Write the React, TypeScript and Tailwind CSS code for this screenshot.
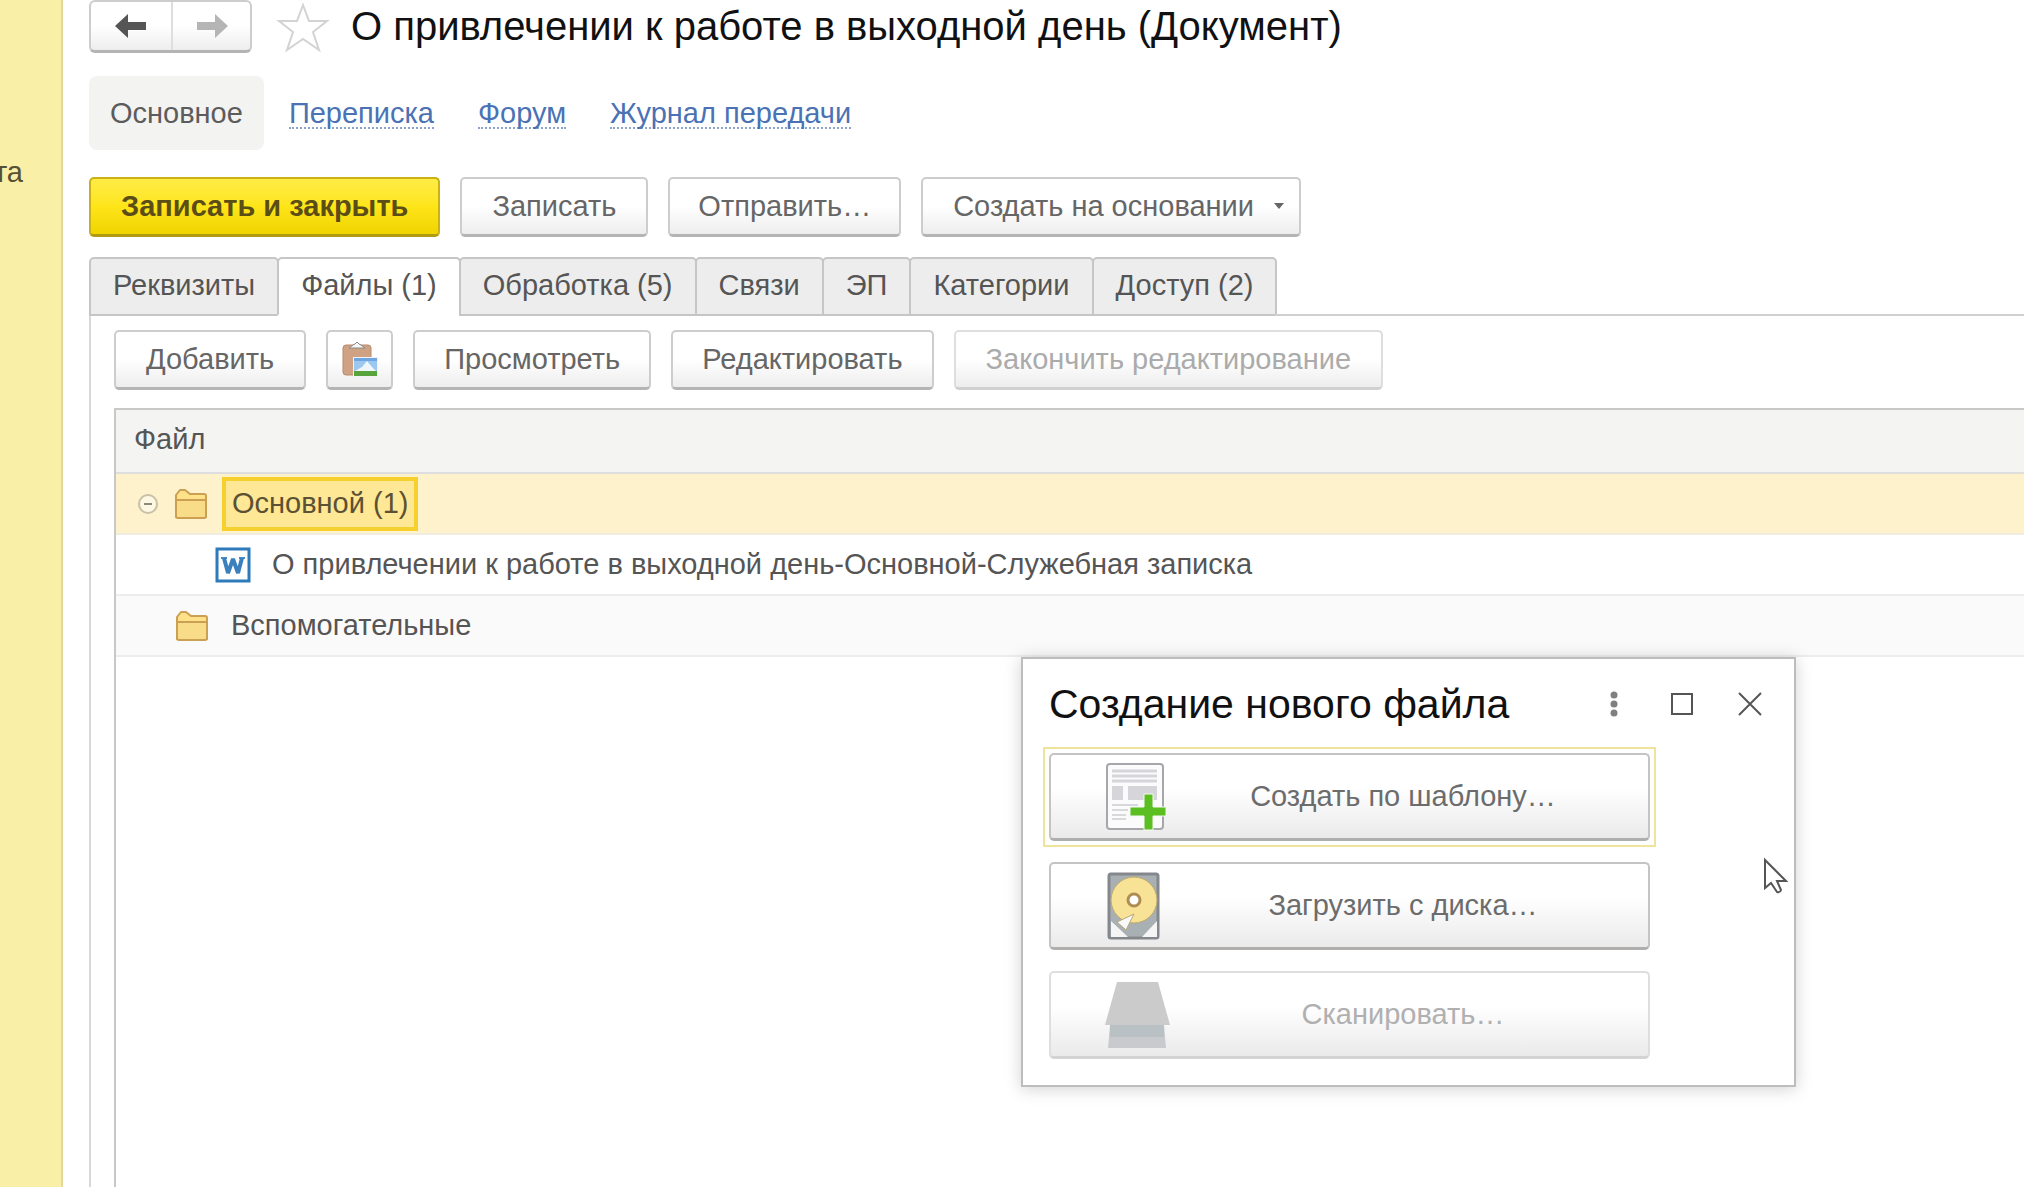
import type { ReactNode } from 'react'
import { clsx } from 'clsx'

const links = ['Переписка', 'Форум', 'Журнал передачи']

const tabs = [
  { title: 'Реквизиты' },
  { title: 'Файлы (1)', active: true },
  { title: 'Обработка (5)' },
  { title: 'Связи' },
  { title: 'ЭП' },
  { title: 'Категории' },
  { title: 'Доступ (2)' },
]

type ButtonProps = {
  children: ReactNode
  primary?: boolean
  disabled?: boolean
  className?: string
  label?: string
}

function Button({ children, primary, disabled, className = 'px-[30px]', label }: ButtonProps) {
  return (
    <button
      type="button"
      disabled={disabled}
      aria-label={label}
      className={clsx(
        'flex h-[60px] shrink-0 items-center justify-center rounded-[5px] border-2 border-b-[3px] pb-0.5 whitespace-nowrap',
        primary && 'border-[#c9b116] border-b-[#b09b12] bg-linear-to-b from-[#ffec45] via-[#fee518] to-[#f0d400] font-bold text-[#5a4d16]',
        !primary && 'bg-linear-to-b from-white from-50% to-[#ededed]',
        !primary && !disabled && 'border-[#cdcdcd] border-b-[#b4b4b4] text-[#666]',
        disabled && 'border-[#dedede] border-b-[#d0d0d0] text-[#ababab]',
        className,
      )}
    >
      {children}
    </button>
  )
}

function StarIcon() {
  return (
    <svg width="54" height="52" viewBox="0 0 54 52" fill="white" stroke="#d3d3d3" strokeWidth="2">
      <path d="M27 4 33 20H51L37 31 43 49 27 38 11 49 17 31 3 20H21Z" />
    </svg>
  )
}

function ArrowIcon({ className }: { className: string }) {
  return (
    <svg width="32" height="24" viewBox="0 0 32 24" fill="currentColor" className={className}>
      <path d="M0 12 13 0V8H31V16H13V24Z" />
    </svg>
  )
}

function PasteIcon() {
  return (
    <svg width="36" height="36" viewBox="0 0 36 36">
      <rect x="1" y="4" width="28" height="30" rx="3" fill="#cfa283" stroke="#b98a6b" />
      <path d="M7 7 11 4 13 3 15 1 17 3 19 4 23 7Z" fill="#f7f7f7" stroke="#888" />
      <path d="M11 16H36V36H11Z" fill="#eef3f8" />
      <path d="M12 17H35V30H12Z" fill="#9cc8f0" />
      <path d="M12 17H35V20H12Z" fill="#6fa6e2" />
      <path d="M13 30 20 26 25 20 30 26 34 30Z" fill="#eff6fc" />
      <path d="M12 30H35V35H12Z" fill="#57a33c" />
    </svg>
  )
}

function FolderIcon() {
  return (
    <svg width="34" height="32" viewBox="0 0 34 32" stroke="#cba052" strokeWidth="2" strokeLinejoin="round">
      <path d="M2 29V7L6 2H11L16 6H30Q32 6 32 8V29Z" fill="#ffe18a" />
      <path d="M2 12H32V28Q32 30 30 30H4Q2 30 2 28Z" fill="#f8dc88" />
    </svg>
  )
}

function WordIcon() {
  return (
    <svg width="36" height="36" viewBox="0 0 36 36" fill="none">
      <rect x="2" y="2" width="32" height="32" fill="white" stroke="#2f7abb" strokeWidth="3" />
      <path d="M6 11H12M24 11H30" stroke="#4a8cc5" strokeWidth="2" />
      <path d="M9 11 13 26 18 12 23 26 27 11" stroke="#3a80be" strokeWidth="4" strokeLinejoin="bevel" />
    </svg>
  )
}

function TemplateIcon() {
  return (
    <svg width="66" height="70" viewBox="0 0 66 70">
      <rect x="3" y="2" width="56" height="65" rx="3" fill="#fbfbfb" stroke="#a5a7aa" strokeWidth="2" />
      <path d="M8 9H53M8 14H53M8 19H53" stroke="#d6d6da" strokeWidth="3" />
      <path d="M8 24H19V38H8ZM24 24H53V38H24Z" fill="#d6d6da" />
      <path d="M8 43H34M8 48H24M8 53H22M8 57H22" stroke="#d9d9dc" strokeWidth="2" />
      <path d="M40 32H49V45H62V54H49V68H40V54H26V45H40Z" fill="#5bbf21" stroke="#f6f8f4" strokeWidth="1" />
    </svg>
  )
}

function DiskIcon() {
  return (
    <svg width="66" height="70" viewBox="0 0 66 70">
      <rect x="5" y="3" width="49" height="64" rx="2" fill="#a9b0b4" stroke="#84888c" strokeWidth="3" />
      <path d="M7 50 24 66H7ZM53 50 38 66H53Z" fill="#f5f5f5" />
      <circle cx="30" cy="29" r="23" fill="#f7e295" stroke="#bda96d" strokeWidth="1" />
      <circle cx="30" cy="29" r="6" fill="white" stroke="#ad8d52" strokeWidth="3" />
      <path d="M30 43 13 51 22 59Z" fill="#f8f8f8" stroke="#b9a777" strokeWidth="1" />
    </svg>
  )
}

function ScannerIcon() {
  return (
    <svg width="66" height="70" viewBox="0 0 66 70">
      <path d="M13 2H54L66 45H1Z" fill="#cbcbcb" />
      <path d="M6 45H60L62 68H4Z" fill="#c9cacd" />
      <path d="M6 45H60V57H6Z" fill="#bac1c5" />
    </svg>
  )
}

function DialogButton({ icon, children, disabled }: { icon: ReactNode; children: ReactNode; disabled?: boolean }) {
  return (
    <button
      type="button"
      disabled={disabled}
      className={clsx(
        'flex h-[88px] w-full items-center rounded-[5px] border-2 border-b-[3px] bg-linear-to-b from-white from-40% to-[#eaeaea] pr-3 pl-[53px]',
        disabled ? 'border-[#dedede] border-b-[#d3d3d3] text-[#b0b0b0]' : 'border-[#c6c3c3] border-b-[#b0adad] text-[#6c6c6c]',
      )}
    >
      {icon}
      <span className="flex-1 pb-0.5 text-center">{children}</span>
    </button>
  )
}

function CreateFileDialog() {
  return (
    <section
      role="dialog"
      aria-labelledby="dialog-title"
      className="absolute top-[657px] left-[1021px] w-[775px] border-2 border-[#bdbdbd] bg-white px-[26px] pt-[17px] pb-[26px] shadow-[0_2px_16px_rgba(0,0,0,0.18)]"
    >
      <header className="flex h-14 items-center justify-between">
        <h2 id="dialog-title" className="text-[41px] leading-14 whitespace-nowrap text-[#111]">
          Создание нового файла
        </h2>
        <div className="flex items-center gap-9 pr-0.5 text-[#555]">
          <button type="button" aria-label="Ещё" className="flex w-8 justify-center">
            <svg width="8" height="26" viewBox="0 0 8 26" fill="#808080">
              <circle cx="4" cy="4" r="3.5" />
              <circle cx="4" cy="13" r="3.5" />
              <circle cx="4" cy="22" r="3.5" />
            </svg>
          </button>
          <button type="button" aria-label="Развернуть" className="flex w-8 justify-center">
            <svg width="22" height="22" viewBox="0 0 22 22" fill="none" stroke="currentColor" strokeWidth="2">
              <path d="M1 1H21V21H1Z" />
            </svg>
          </button>
          <button type="button" aria-label="Закрыть" className="flex w-8 justify-center">
            <svg width="24" height="24" viewBox="0 0 24 24" fill="none" stroke="currentColor" strokeWidth="2">
              <path d="M1 1 23 23M23 1 1 23" />
            </svg>
          </button>
        </div>
      </header>
      <div className="mt-[21px] mr-[118px] flex flex-col gap-[21px]">
        <div className="-m-[6px] border-2 border-[#f0e49c] p-1">
          <DialogButton icon={<TemplateIcon />}>Создать по шаблону…</DialogButton>
        </div>
        <DialogButton icon={<DiskIcon />}>Загрузить с диска…</DialogButton>
        <DialogButton icon={<ScannerIcon />} disabled>Сканировать…</DialogButton>
      </div>
    </section>
  )
}

function FileTable() {
  return (
    <div className="flex-1 border-t-2 border-l-2 border-[#c8c8c8]">
      <table className="w-full border-collapse text-left text-[#555]">
        <thead>
          <tr className="h-[63px] border-b-2 border-[#dedede] bg-[#f4f4f3]">
            <th className="pb-1 pl-[18px] font-normal">Файл</th>
          </tr>
        </thead>
        <tbody>
          <tr className="h-[61px] border-b-2 border-[#f0ecdf] bg-[#fdf2cb]">
            <td className="p-0">
              <div className="flex items-center pl-[22px]">
                <button type="button" aria-label="Свернуть" className="mr-4">
                  <svg width="20" height="20" viewBox="0 0 20 20" fill="#fdf8e4" stroke="#c9c1a4" strokeWidth="2">
                    <circle cx="10" cy="10" r="9" />
                    <path d="M6 10H14" stroke="#8f8a78" />
                  </svg>
                </button>
                <FolderIcon />
                <span className="ml-[14px] border-4 border-[#f5d02f] bg-[#fee795] px-[6px] pt-1 pb-[6px] leading-9 text-[#5c5132]">Основной (1)</span>
              </div>
            </td>
          </tr>
          <tr className="h-[61px] border-b-2 border-[#ededed]">
            <td className="p-0">
              <div className="flex items-center gap-[21px] pl-[99px]">
                <WordIcon />
                <span className="pb-0.5">О привлечении к работе в выходной день-Основной-Служебная записка</span>
              </div>
            </td>
          </tr>
          <tr className="h-[61px] border-b-2 border-[#ededed] bg-[#fafafa]">
            <td className="p-0">
              <div className="flex items-center gap-[22px] pl-[59px]">
                <FolderIcon />
                <span className="pb-0.5">Вспомогательные</span>
              </div>
            </td>
          </tr>
        </tbody>
      </table>
    </div>
  )
}

export default function App() {
  return (
    <div className="relative flex min-h-screen overflow-hidden bg-white font-['Liberation_Sans',Arial,sans-serif] text-[29px] leading-9">
      <aside className="flex w-[63px] shrink-0 justify-end border-r-2 border-[#e3d79c] bg-[#faefa7] pt-[154px] pr-[38px] text-[#555036]">
        та
      </aside>

      <main className="flex min-w-0 flex-1 flex-col pl-[26px]">
        <header className="flex h-[53px] items-center">
          <div className="flex h-full w-[163px] rounded-[6px] border-2 border-b-[3px] border-[#cdcdcd] border-b-[#b4b4b4] bg-linear-to-b from-white from-50% to-[#ededed]">
            <button type="button" aria-label="Назад" className="flex w-[82px] items-center justify-center border-r-2 border-[#dedede]">
              <ArrowIcon className="text-[#555]" />
            </button>
            <button type="button" aria-label="Вперёд" className="flex flex-1 items-center justify-center">
              <ArrowIcon className="rotate-180 text-[#b5b5b5]" />
            </button>
          </div>
          <button type="button" aria-label="В избранное" className="mr-[21px] ml-6">
            <StarIcon />
          </button>
          <h1 className="pb-0.5 text-[40px] whitespace-nowrap text-[#111]">О привлечении к работе в выходной день (Документ)</h1>
        </header>

        <nav className="mt-[23px] flex h-[74px] items-center gap-11 whitespace-nowrap">
          <span className="-mr-[19px] flex h-full items-center rounded-[8px] bg-[#f3f3f2] px-[21px] text-[#5c5c5c]">Основное</span>
          {links.map((link) => (
            <a key={link} href="#" className="mt-0.5 border-b-2 border-dotted border-[#8ba3cc] leading-7 text-[#4a72b4]">
              {link}
            </a>
          ))}
        </nav>

        <div className="mt-[27px] flex gap-5">
          <Button primary>Записать и закрыть</Button>
          <Button>Записать</Button>
          <Button className="px-7">Отправить…</Button>
          <Button className="gap-5 pr-[15px] pl-[30px]">
            Создать на основании
            <svg width="10" height="6" viewBox="0 0 10 6" fill="#666">
              <path d="M0 0H10L5 6Z" />
            </svg>
          </Button>
        </div>

        <div role="tablist" className="mt-5 flex">
          {tabs.map((tab) => (
            <button
              key={tab.title}
              type="button"
              role="tab"
              aria-selected={!!tab.active}
              className={clsx(
                '-mr-[2px] h-[59px] rounded-t-[5px] border-2 border-[#c6c6c6] px-[22px] pb-1 whitespace-nowrap text-[#555]',
                tab.active ? 'border-b-white bg-white' : 'bg-[#ededed]',
              )}
            >
              {tab.title}
            </button>
          ))}
          <div className="flex-1 border-b-2 border-[#d0d0d0]" />
        </div>

        <div role="tabpanel" className="flex flex-1 flex-col border-l-2 border-[#d8d8d8] pt-3.5 pl-[23px]">
          <div className="mb-[18px] flex gap-5">
            <Button>Добавить</Button>
            <Button className="w-[67px]" label="Вставить из буфера">
              <PasteIcon />
            </Button>
            <Button className="px-[29px]">Просмотреть</Button>
            <Button className="px-[29px]">Редактировать</Button>
            <Button disabled>Закончить редактирование</Button>
          </div>
          <FileTable />
        </div>
      </main>

      <CreateFileDialog />

      <svg className="absolute top-[857px] left-[1763px]" width="26" height="38" viewBox="0 0 26 38" fill="white" stroke="#555" strokeWidth="2">
        <path d="M2 3V31L8 26 14 35Q17 36 18 33L14 24H23Z" />
      </svg>
    </div>
  )
}
